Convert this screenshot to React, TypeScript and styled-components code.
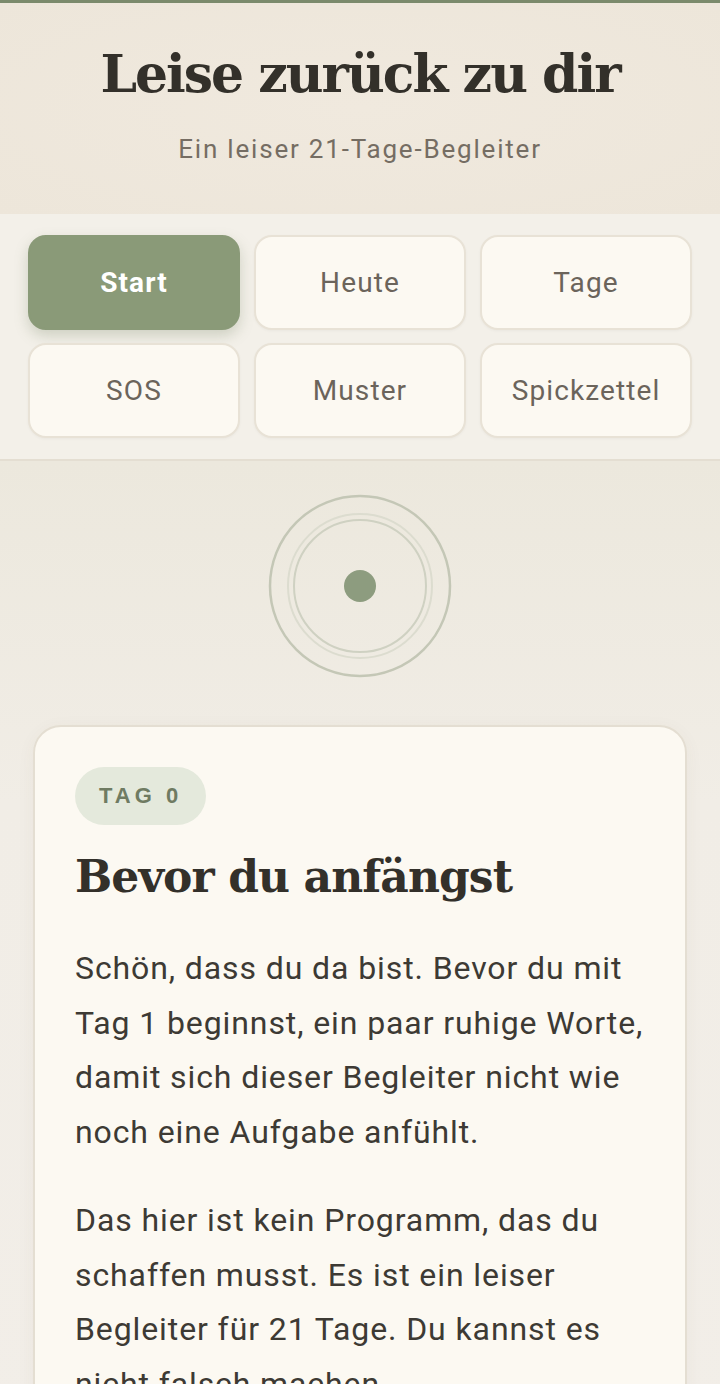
import * as React from 'react';
import styled, { createGlobalStyle } from 'styled-components';

const Colors = {
    sage: '#8a9a78',
    sageDark: '#6f7b62',
    ink: '#33302a',
    muted: '#756d63',
    cream: '#fcf9f2',
    line: '#e4ded2',
};

const GlobalStyle = createGlobalStyle`
    html, body {
        margin: 0;
        padding: 0;
        background: #f1ede6;
    }
    body {
        font-family: Roboto, "Noto Sans", sans-serif;
        color: ${Colors.ink};
    }
`;

const Page = styled.div`
    width: 720px;
    min-height: 1384px;
    border-top: 3px solid #7b8a6c;
    box-sizing: border-box;
    background: linear-gradient(180deg, #ece8dd 460px, #f1ede6 800px, #f2eee8 100%);
`;

const Header = styled.header`
    height: 211px;
    background: radial-gradient(ellipse at 50% 50%, #f0e9de 0%, #ede6da 100%);
    display: flex;
    flex-direction: column;
    align-items: center;
    box-sizing: border-box;
    padding-top: 38px;
`;

const Title = styled.h1`
    margin: 0;
    font-family: "DejaVu Serif", "Liberation Serif", serif;
    font-weight: bold;
    font-size: 52px;
    letter-spacing: -2px;
    line-height: 66px;
    color: ${Colors.ink};
`;

const Subtitle = styled.p`
    margin: 26px 0 0;
    font-size: 26px;
    letter-spacing: 1.8px;
    color: ${Colors.muted};
    line-height: 32px;
`;

const Nav = styled.nav`
    background: #f3f0e9;
    border-bottom: 2px solid ${Colors.line};
    display: grid;
    grid-template-columns: repeat(3, 1fr);
    gap: 13px 14px;
    padding: 21px 28px 21px 28px;
`;

const NavButton = styled.button<{ $active?: boolean }>`
    height: 95px;
    border-radius: 18px;
    font-family: Roboto, sans-serif;
    font-size: 28px;
    letter-spacing: 1.1px;
    font-weight: ${p => (p.$active ? 700 : 400)};
    color: ${p => (p.$active ? '#ffffff' : '#6b645b')};
    background: ${p => (p.$active ? Colors.sage : Colors.cream)};
    border: 2px solid ${p => (p.$active ? Colors.sage : '#e8e2d6')};
    box-shadow: ${p => (p.$active ? '0 6px 14px rgba(110, 125, 95, 0.28)' : '0 1px 3px rgba(0,0,0,0.04)')};
    padding: 0;
`;

const Main = styled.main`
    display: flex;
    flex-direction: column;
    align-items: center;
    padding: 32px 33px 0;
`;

const Emblem = styled.svg`
    display: block;
`;

const Card = styled.section`
    margin-top: 46px;
    align-self: stretch;
    background: ${Colors.cream};
    border: 2px solid ${Colors.line};
    border-radius: 28px;
    padding: 40px 40px 40px;
    box-shadow: 0 4px 18px rgba(90, 80, 60, 0.05);
`;

const Badge = styled.span`
    display: inline-flex;
    align-items: center;
    height: 58px;
    padding: 0 24px;
    border-radius: 29px;
    background: #e4e9dc;
    color: ${Colors.sageDark};
    font-family: "Liberation Sans", Arial, sans-serif;
    font-weight: 700;
    font-size: 22px;
    letter-spacing: 4px;
`;

const CardTitle = styled.h2`
    margin: 22px 0 0;
    font-family: "DejaVu Serif", "Liberation Serif", serif;
    font-weight: bold;
    font-size: 44px;
    letter-spacing: -0.9px;
    line-height: 60px;
    color: ${Colors.ink};
`;

const Paragraph = styled.p`
    margin: 34px 0 0;
    font-size: 32px;
    letter-spacing: 0.9px;
    line-height: 54.5px;
    color: #3d3a34;
    & + & {
        margin-top: 34px;
    }
`;

const tabs = ['Start', 'Heute', 'Tage', 'SOS', 'Muster', 'Spickzettel'];

export default function App() {
    return (
        <Page>
            <GlobalStyle />
            <Header>
                <Title>Leise zurück zu dir</Title>
                <Subtitle>Ein leiser 21-Tage-Begleiter</Subtitle>
            </Header>
            <Nav>
                {tabs.map(t => (
                    <NavButton key={t} $active={t === 'Start'}>{t}</NavButton>
                ))}
            </Nav>
            <Main>
                <Emblem width="186" height="186" viewBox="0 0 186 186">
                    <circle cx="93" cy="93" r="90" fill="none" stroke="#c4c7b6" strokeWidth="2.5" />
                    <circle cx="93" cy="93" r="72" fill="none" stroke="#dcdccf" strokeWidth="2" />
                    <circle cx="93" cy="93" r="66" fill="none" stroke="#cfd1c2" strokeWidth="2" />
                    <circle cx="93" cy="93" r="16" fill="#8d9c7f" />
                </Emblem>
                <Card>
                    <Badge>TAG 0</Badge>
                    <CardTitle>Bevor du anfängst</CardTitle>
                    <Paragraph>
                        Schön, dass du da bist. Bevor du mit Tag 1 beginnst, ein paar ruhige Worte,
                        damit sich dieser Begleiter nicht wie noch eine Aufgabe anfühlt.
                    </Paragraph>
                    <Paragraph>
                        Das hier ist kein Programm, das du schaffen musst. Es ist ein leiser
                        Begleiter für 21 Tage. Du kannst es nicht falsch machen.
                    </Paragraph>
                </Card>
            </Main>
        </Page>
    );
}
